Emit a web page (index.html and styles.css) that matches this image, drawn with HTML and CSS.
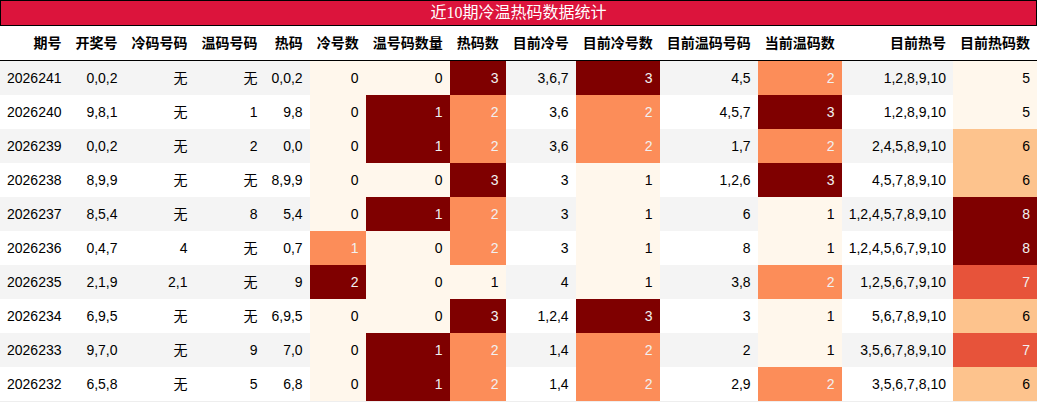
FILE: index.html
```html
<!DOCTYPE html>
<html lang="zh">
<head>
<meta charset="utf-8">
<title>近10期冷温热码数据统计</title>
<link rel="stylesheet" href="styles.css">
</head>
<body>
<table class="stats">
  <caption class="title">近10期冷温热码数据统计</caption>
  <thead>
    <tr>
      <th>期号</th><th>开奖号</th><th>冷码号码</th><th>温码号码</th><th>热码</th><th>冷号数</th><th>温号码数量</th><th>热码数</th><th>目前冷号</th><th>目前冷号数</th><th>目前温码号码</th><th>当前温码数</th><th>目前热号</th><th>目前热码数</th>
    </tr>
  </thead>
  <tbody>
    <tr><td>2026241</td><td>0,0,2</td><td>无</td><td>无</td><td>0,0,2</td><td class="lo">0</td><td class="lo">0</td><td class="hi">3</td><td>3,6,7</td><td class="hi">3</td><td>4,5</td><td class="mid">2</td><td>1,2,8,9,10</td><td class="lo">5</td></tr>
    <tr><td>2026240</td><td>9,8,1</td><td>无</td><td>1</td><td>9,8</td><td class="lo">0</td><td class="hi">1</td><td class="mid">2</td><td>3,6</td><td class="mid">2</td><td>4,5,7</td><td class="hi">3</td><td>1,2,8,9,10</td><td class="lo">5</td></tr>
    <tr><td>2026239</td><td>0,0,2</td><td>无</td><td>2</td><td>0,0</td><td class="lo">0</td><td class="hi">1</td><td class="mid">2</td><td>3,6</td><td class="mid">2</td><td>1,7</td><td class="mid">2</td><td>2,4,5,8,9,10</td><td class="q1">6</td></tr>
    <tr><td>2026238</td><td>8,9,9</td><td>无</td><td>无</td><td>8,9,9</td><td class="lo">0</td><td class="lo">0</td><td class="hi">3</td><td>3</td><td class="lo">1</td><td>1,2,6</td><td class="hi">3</td><td>4,5,7,8,9,10</td><td class="q1">6</td></tr>
    <tr><td>2026237</td><td>8,5,4</td><td>无</td><td>8</td><td>5,4</td><td class="lo">0</td><td class="hi">1</td><td class="mid">2</td><td>3</td><td class="lo">1</td><td>6</td><td class="lo">1</td><td>1,2,4,5,7,8,9,10</td><td class="hi">8</td></tr>
    <tr><td>2026236</td><td>0,4,7</td><td>4</td><td>无</td><td>0,7</td><td class="mid">1</td><td class="lo">0</td><td class="mid">2</td><td>3</td><td class="lo">1</td><td>8</td><td class="lo">1</td><td>1,2,4,5,6,7,9,10</td><td class="hi">8</td></tr>
    <tr><td>2026235</td><td>2,1,9</td><td>2,1</td><td>无</td><td>9</td><td class="hi">2</td><td class="lo">0</td><td class="lo">1</td><td>4</td><td class="lo">1</td><td>3,8</td><td class="mid">2</td><td>1,2,5,6,7,9,10</td><td class="q2">7</td></tr>
    <tr><td>2026234</td><td>6,9,5</td><td>无</td><td>无</td><td>6,9,5</td><td class="lo">0</td><td class="lo">0</td><td class="hi">3</td><td>1,2,4</td><td class="hi">3</td><td>3</td><td class="lo">1</td><td>5,6,7,8,9,10</td><td class="q1">6</td></tr>
    <tr><td>2026233</td><td>9,7,0</td><td>无</td><td>9</td><td>7,0</td><td class="lo">0</td><td class="hi">1</td><td class="mid">2</td><td>1,4</td><td class="mid">2</td><td>2</td><td class="lo">1</td><td>3,5,6,7,8,9,10</td><td class="q2">7</td></tr>
    <tr><td>2026232</td><td>6,5,8</td><td>无</td><td>5</td><td>6,8</td><td class="lo">0</td><td class="hi">1</td><td class="mid">2</td><td>1,4</td><td class="mid">2</td><td>2,9</td><td class="mid">2</td><td>3,5,6,7,8,10</td><td class="q1">6</td></tr>
  </tbody>
</table>
</body>
</html>
```

FILE: styles.css
```css
html, body {
  margin: 0;
  padding: 0;
  background: #fff;
}

.stats {
  border-collapse: collapse;
  font-family: "Liberation Sans", "Noto Sans CJK SC", sans-serif;
  font-size: 14px;
  color: #000;
  border-bottom: 1px solid #eeeeee;
}

.title {
  background: #dc143c;
  color: #fff;
  border: 1px solid #000;
  font-family: "Liberation Serif", "Noto Sans CJK SC", serif;
  font-size: 16px;
  line-height: 24px;
  text-align: center;
}

.stats th,
.stats td {
  padding: 8px 7px;
  line-height: 18px;
  text-align: right;
  white-space: nowrap;
}

.stats th {
  font-weight: bold;
  border-bottom: 1px solid #000;
}

.stats tbody tr:nth-child(odd) {
  background: #f4f4f4;
}

.stats tbody tr:nth-child(even) {
  background: #fff;
}

.stats td.lo { background: #fff7ec; color: #000; }
.stats td.q1 { background: #fdc38d; color: #000; }
.stats td.mid { background: #fc8d59; color: #f1f1f1; }
.stats td.q2 { background: #e7533a; color: #f1f1f1; }
.stats td.hi { background: #7f0000; color: #f1f1f1; }
```
